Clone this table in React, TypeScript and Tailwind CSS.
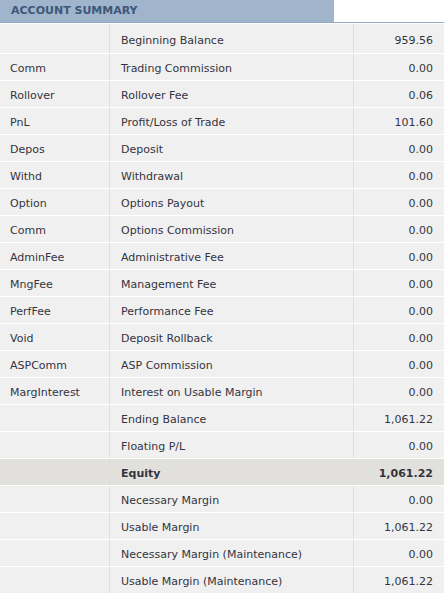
const rows: [string, string, string, boolean?][] = [
  ["", "Beginning Balance", "959.56"],
  ["Comm", "Trading Commission", "0.00"],
  ["Rollover", "Rollover Fee", "0.06"],
  ["PnL", "Profit/Loss of Trade", "101.60"],
  ["Depos", "Deposit", "0.00"],
  ["Withd", "Withdrawal", "0.00"],
  ["Option", "Options Payout", "0.00"],
  ["Comm", "Options Commission", "0.00"],
  ["AdminFee", "Administrative Fee", "0.00"],
  ["MngFee", "Management Fee", "0.00"],
  ["PerfFee", "Performance Fee", "0.00"],
  ["Void", "Deposit Rollback", "0.00"],
  ["ASPComm", "ASP Commission", "0.00"],
  ["MargInterest", "Interest on Usable Margin", "0.00"],
  ["", "Ending Balance", "1,061.22"],
  ["", "Floating P/L", "0.00"],
  ["", "Equity", "1,061.22", true],
  ["", "Necessary Margin", "0.00"],
  ["", "Usable Margin", "1,061.22"],
  ["", "Necessary Margin (Maintenance)", "0.00"],
  ["", "Usable Margin (Maintenance)", "1,061.22"],
];

const App = () => {
  return (
    <div className="w-[448px] h-[595px] bg-white text-[11px] text-[#343440] font-['DejaVu_Sans',sans-serif]">
      {/* Header */}
      <div className="w-[444px] border-b border-[#92a9c5]">
        <div className="w-[334px] h-[22px] bg-[#a0b4cc] pl-[11px] flex items-center">
          <span className="font-bold text-[#3d5878]">ACCOUNT SUMMARY</span>
        </div>
      </div>

      <div className="mt-[1px] w-[444px]">
        {rows.map(([code, label, value, bold], i) => {
          const pad = i === 0 ? "pt-[6px]" : "pt-[4px]";
          return (
            <div
              key={i}
              className={`grid grid-cols-[110px_244px_90px] border-b border-white ${
                i === 0 ? "h-[30px]" : "h-[27px]"
              } ${bold ? "bg-[#e2e0dd] font-bold" : "bg-[#f0f0f0]"}`}
            >
              <div className={`flex items-center pl-[10px] border-r border-[#dedede] ${pad}`}>{code}</div>
              <div className={`flex items-center pl-[11px] border-r border-[#dedede] ${pad}`}>{label}</div>
              <div className={`flex items-center justify-end pr-[11px] ${pad}`}>{value}</div>
            </div>
          );
        })}
      </div>
    </div>
  );
};

export default App;
